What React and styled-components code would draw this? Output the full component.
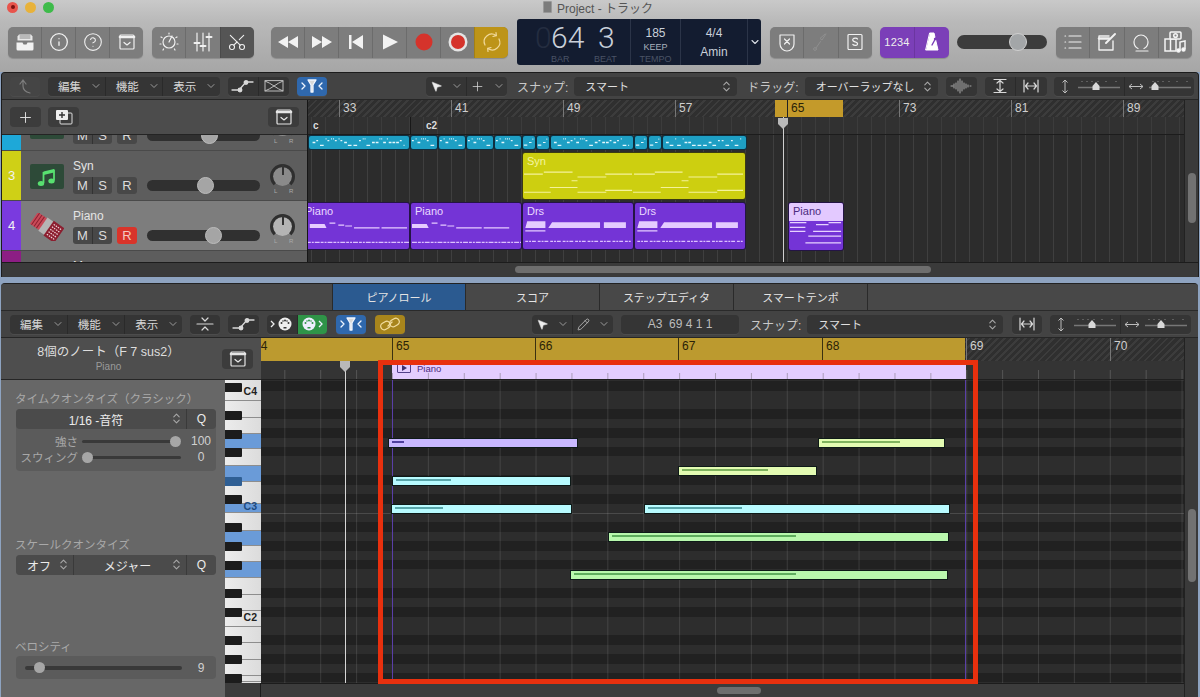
import React from 'react';
import styled, { createGlobalStyle } from 'styled-components';
import { Info, CircleHelp, Scissors, MousePointer2, Plus, Pencil, ChevronDown, ChevronsUpDown } from 'lucide-react';

const FONT = `"Liberation Sans", "Noto Sans CJK JP", sans-serif`;

const Global = createGlobalStyle`
  html, body { margin: 0; padding: 0; background: #8ea3c0; }
  * { box-sizing: border-box; }
  #root { width: 1200px; height: 697px; overflow: hidden; }
`;

const Page = styled.div`
  width: 1200px; height: 697px; overflow: hidden; display: flex; flex-direction: column;
  font-family: ${FONT}; color: #e6e6e6; position: relative;
`;

/* ---------- top toolbar ---------- */
const TopBar = styled.header`
  height: 72px; flex: none; display: flex; flex-direction: column;
  background: linear-gradient(#c9c9c9, #b9b9b9 30%, #a6a6a6);
`;
const TitleRow = styled.div`
  height: 14px; display: flex; align-items: center; position: relative; padding-left: 7px; gap: 7px;
`;
const Light = styled.span`
  width: 11px; height: 11px; border-radius: 50%; background: ${p => p.$c};
  display: flex; align-items: center; justify-content: center;
`;
const LightDot = styled.span`width: 4px; height: 4px; border-radius: 50%; background: #7a1010;`;
const Title = styled.div`
  position: absolute; left: 543px; top: 0; height: 14px; display: flex; align-items: center; gap: 5px;
  font-size: 12px; color: #555; white-space: nowrap;
`;
const ProjIcon = styled.span`width: 9px; height: 12px; background: #7c7c7c; border: 1px solid #999; border-radius: 1px;`;

const Tools = styled.div`
  margin-top: 5px; height: 46px; padding-left: 8px; display: flex; align-items: center; gap: 9px;
`;
const Grp = styled.div`
  display: flex; flex: none; width: ${p => p.$w}px; height: 31px; margin-left: ${p => p.$ml || 0}px;
  border-radius: 5px; overflow: hidden; background: ${p => p.$bg || '#7d7d7d'};
  box-shadow: 0 1px 1px rgba(0,0,0,.18);
`;
const TBtn = styled.div`
  flex: 1; display: flex; align-items: center; justify-content: center; color: #f0f0f0;
  background: ${p => p.$bg || 'transparent'};
  & + & { border-left: 1px solid rgba(0,0,0,.13); }
`;
const Count = styled.span`font-size: 11px; color: #eee; letter-spacing: .2px;`;

const Lcd = styled.div`
  width: 244px; height: 46px; flex: none; display: flex; border-radius: 3px; background: #131c30; color: #c9d0da;
`;
const LcdPos = styled.div`
  width: 114px; position: relative; border-right: 1px solid #2b3448;
`;
const BigNum = styled.span`
  position: absolute; top: 2px; left: ${p => p.$x}px; font: 300 30px/34px Roboto, sans-serif;
  color: ${p => p.$dim ? '#242d40' : '#c9d0da'};
`;
const LcdCap = styled.span`
  position: absolute; bottom: 0; left: ${p => p.$x}px; font-size: 9px; line-height: 11px; color: #4a5366;
`;
const LcdCol = styled.div`
  width: ${p => p.$w}px; display: flex; flex-direction: column; align-items: center; border-right: 1px solid #2b3448;
  padding-top: 7px;
`;
const LcdVal = styled.span`font-size: 12px; line-height: 14px; color: #c9d0da; margin-top: ${p => p.$mt || 0}px;`;
const LcdSub = styled.span`font-size: 9px; line-height: 12px; color: ${p => p.$dim ? '#4a5366' : '#a9b1bd'}; margin-top: ${p => p.$mt || 0}px;`;
const LcdMore = styled.div`flex: 1; display: flex; align-items: center; justify-content: center; color: #d8dde4;`;

const VolTrack = styled.div`
  width: 90px; height: 14px; flex: none; border-radius: 7px; background: #3c3c3c; position: relative; margin: 0 0 0 -1px;
`;
const VolThumb = styled.span`
  position: absolute; left: 52px; top: -2px; width: 18px; height: 18px; border-radius: 50%;
  background: #a3a6a8; border: 1px solid #d0d0d0;
`;

/* ---------- windows ---------- */
const ArrangeWin = styled.section`
  height: 205px; flex: none; margin: 0 1px 0 1px; background: #383838; border: 1px solid #1c1c1c; border-bottom: 0;
  border-radius: 4px 4px 0 0; display: flex; flex-direction: column; overflow: hidden;
`;
const Stripe = styled.div`height: 6px; flex: none; background: #8ea3c0;`;
const ToolRow = styled.div`
  height: 27px; flex: none; display: flex; align-items: center; padding-left: ${p => p.$pl || 9}px;
  background: #434343; border-bottom: 1px solid #262626;
`;
const DGrp = styled.div`
  display: flex; flex: none; height: 19px; width: ${p => p.$w}px; margin-left: ${p => p.$ml || 0}px;
  border-radius: 4px; overflow: hidden; background: ${p => p.$bg || '#353535'};
  box-shadow: 0 1px 0 rgba(255,255,255,.05);
  color: #d5d5d5;
`;
const DBtn = styled.div`
  flex: 1; display: flex; align-items: center; justify-content: center; gap: 8px;
  font-size: 12px; color: ${p => p.$c || '#d8d8d8'}; background: ${p => p.$bg || 'transparent'};
  & + & { border-left: 1px solid #2a2a2a; }
`;
const MenuCell = styled(DBtn)`justify-content: flex-start; padding-left: 10px; gap: 9px; font-size: 11.5px;`;
const Chev = styled(ChevronDown)`color: #9a9a9a; flex: none;`;
const ToolLabel = styled.span`
  margin-left: ${p => p.$ml}px; font-size: 12px; color: #c8c8c8; white-space: nowrap; flex: none;
`;
const SelectBox = styled.div`
  flex: none; width: ${p => p.$w}px; height: 19px; margin-left: ${p => p.$ml}px; border-radius: 4px; background: #353535;
  display: flex; align-items: center; justify-content: space-between; padding: 0 4px 0 11px; font-size: 11px; color: #e0e0e0;
  white-space: nowrap;
`;
const Stepper = styled(ChevronsUpDown)`color: #a8a8a8; flex: none;`;

const ArrangeBody = styled.div`
  height: 162px; flex: none; display: grid; grid-template-columns: 306px 1fr;
`;
const TrackCol = styled.div`
  display: flex; flex-direction: column; border-right: 1px solid #161616; overflow: hidden; min-height: 0;
`;
const TrackHead = styled.div`
  height: 35px; flex: none; background: #4c4c4c; border-bottom: 1px solid #242424; display: flex; align-items: center;
  padding-left: 8px; position: relative; z-index: 1;
`;
const HeadBtn = styled.div`
  width: ${p => p.$w || 31}px; height: 20px; flex: none; margin-left: ${p => p.$ml || 0}px; border-radius: 4px; background: #3c3c3c;
  display: flex; align-items: center; justify-content: center; color: #e6e6e6;
`;
const TrackList = styled.div`flex: 1; overflow: hidden; background: #4a4a4a; min-height: 0;`;
const TrackScroll = styled.div`margin-top: -34px;`;
const Track = styled.div`
  height: 50px; display: flex; border-bottom: 1px solid #4a4a4a;
  background: ${p => p.$sel ? '#7d7d7d' : '#5d5d5d'};
`;
const TrackNum = styled.div`
  width: 19px; flex: none; background: ${p => p.$c}; color: #f2f2f2; font-size: 13px;
  display: flex; align-items: center; justify-content: center;
`;
const TrackIcon = styled.div`
  width: 34px; height: 25px; flex: none; margin: 13px 0 0 9px; border-radius: 2px; background: ${p => p.$bg || 'transparent'};
  display: flex; align-items: center; justify-content: center;
`;
const TrackMain = styled.div`
  width: 72px; flex: none; margin-left: 9px; display: flex; flex-direction: column; padding-top: 8px;
`;
const TrackName = styled.div`font-size: 12px; line-height: 15px; height: 18px; color: #e4e4e4;`;
const MsrRow = styled.div`display: flex; gap: 5px;`;
const MsGroup = styled.div`display: flex; width: 39px; height: 17px; border-radius: 3px; overflow: hidden; background: #484848;`;
const MsBtn = styled.div`
  flex: 1; display: flex; align-items: center; justify-content: center; font-size: 13px; color: #dcdcdc;
  background: ${p => p.$bg || 'transparent'};
  & + & { border-left: 1px solid #333; }
`;
const RBtn = styled(MsBtn)`flex: none; width: 20px; height: 17px; border-radius: 3px; background: ${p => p.$on ? '#d9342a' : '#484848'}; color: ${p => p.$on ? '#f5c7c0' : '#dcdcdc'};`;
const Fader = styled.div`
  width: 113px; height: 11px; flex: none; margin: 29px 0 0 2px; border-radius: 6px; background: #303030; position: relative;
`;
const FaderThumb = styled.span`
  position: absolute; left: ${p => p.$x}px; top: -3px; width: 17px; height: 17px; border-radius: 50%; background: #a5a5a5;
  border: 1px solid #bcbcbc;
`;
const KnobWrap = styled.div`position: relative; margin-left: 10px; width: 25px; flex: none;`;
const Knob = styled.div`
  width: 25px; height: 25px; margin-top: 13px; border-radius: 50%; border: 3px solid #2f2f2f; position: relative;
  border-bottom-color: transparent;
  background: ${p => p.$sel ? '#b4b4b4' : '#8a8a8a'}; background-clip: padding-box;
  &::before { content: ''; position: absolute; left: 8.5px; top: -3px; width: 2px; height: 11px; background: #333; }
`;
const LR = styled.span`
  position: absolute; top: 37px; font-size: 6px; color: #aaa; left: ${p => p.$x}px;
`;

const ArrangeCanvasWrap = styled.div`display: flex; min-width: 0; min-height: 0;`;
const ArrangeCanvas = styled.div`flex: 1; position: relative; display: flex; flex-direction: column; min-width: 0; overflow: hidden;`;
const Hatch = styled.div`
  height: 17px; flex: none; position: relative; overflow: hidden;
  background: repeating-linear-gradient(135deg, #3c3c3c 0 2px, #2f2f2f 2px 5px);
`;
const BarNum = styled.span.attrs(p => ({ style: { left: p.$x } }))`
  position: absolute; top: 0; height: 100%; padding: 1px 0 0 3px; border-left: 1px solid ${p => p.$c || '#777'};
  font-size: 12px; line-height: 15px; color: ${p => p.$dark ? '#2a2208' : '#cfcfcf'};
`;
const Cycle = styled.div`position: absolute; left: 467px; top: 0; width: 68px; height: 17px; background: #c49a2a;`;
const MarkerRow = styled.div`
  height: 18px; flex: none; position: relative; background: #313131; border-bottom: 1px solid #1c1c1c;
  background-image: linear-gradient(90deg, #3c3c3c 1px, transparent 1px); background-size: 14px 100%; background-position: 3px 0;
`;
const Marker = styled.span.attrs(p => ({ style: { left: p.$x } }))`
  position: absolute; top: 0; padding-left: 5px; height: 100%; font-size: 10px; line-height: 17px; font-weight: bold; color: #ddd;
`;
const MarkerSep = styled.span`position: absolute; left: 102px; top: 0; width: 1px; height: 100%; background: #181818;`;
const Lanes = styled.div`
  flex: 1; position: relative; overflow: hidden; background-color: #2c2c2c;
  background-image: linear-gradient(90deg, #3f3f3f 1px, transparent 1px); background-size: 14px 100%; background-position: 3px 0;
`;
const Region = styled.div.attrs(p => ({ style: { left: p.$x, top: p.$y, width: p.$w, height: p.$h } }))`
  position: absolute; border-radius: 3px; overflow: hidden; background: ${p => p.$bg};
  border: 1px solid rgba(10,10,20,.75); color: ${p => p.$fg || '#ead9ff'};
  font-size: 11px; line-height: 13px;
`;
const RegionName = styled.span`position: absolute; left: 4px; top: 2px; white-space: nowrap;`;
const RegionArt = styled.svg`position: absolute; left: 0; top: 0; width: 100%; height: 100%;`;
const SelTop = styled.div`position: absolute; left: 0; top: 0; right: 0; height: 18px; background: #e3c9ff;`;
const Playhead = styled.div`position: absolute; left: 475px; top: 17px; bottom: 0; width: 1px; background: #cfcfcf; z-index: 3;`;
const PlayCap = styled.svg`position: absolute; left: -6px; top: 1px;`;
const VScroll = styled.div`
  width: 14px; flex: none; position: relative; background: #3a3a3a; border-left: 1px solid #222;
`;
const VThumb = styled.span`
  position: absolute; left: 3px; top: ${p => p.$y}px; width: 8px; height: ${p => p.$h}px; border-radius: 4px; background: #727272;
`;
const ArrangeFoot = styled.div`
  height: 14px; flex: none; background: #3a3a3a; border-top: 1px solid #1c1c1c; position: relative;
`;
const HThumb = styled.span`
  position: absolute; left: ${p => p.$x}px; top: 3px; width: ${p => p.$w}px; height: 7px; border-radius: 4px; background: #6e6e6e;
`;

/* ---------- piano roll window ---------- */
const EditorWin = styled.section`
  flex: 1; min-height: 0; margin: 0 2px 0 1px; background: #444; border-top: 1px solid #222; border-radius: 4px 4px 0 0;
  display: flex; flex-direction: column; overflow: hidden;
`;
const TabRow = styled.div`
  height: 27px; flex: none; display: flex; padding-left: 331px; background: #484848; border-bottom: 1px solid #2a2a2a;
`;
const Tab = styled.div`
  width: 134px; flex: none; display: flex; align-items: center; justify-content: center; font-size: 11px; color: #e4e4e4;
  background: ${p => p.$on ? '#2b5a90' : 'transparent'}; border-right: 1px solid #2a2a2a;
  &:first-child { border-left: 1px solid #2a2a2a; }
`;
const EditorMain = styled.div`
  flex: 1; min-height: 0; display: grid; grid-template-columns: 260px 1fr; position: relative;
`;
const LeftCol = styled.div`display: flex; flex-direction: column; min-height: 0;`;
const InfoHead = styled.div`
  height: 42px; flex: none; background: #4e4e4e; border-bottom: 1px solid #262626; display: flex; align-items: center; padding: 0 8px 0 0;
`;
const InfoText = styled.div`flex: 1; display: flex; flex-direction: column; align-items: center; padding-right: 6px;`;
const InfoTitle = styled.div`font-size: 12.5px; line-height: 15px; color: #dedede; white-space: nowrap;`;
const InfoSub = styled.div`font-size: 10px; line-height: 13px; color: #9a9a9a;`;
const LowerLeft = styled.div`flex: 1; min-height: 0; display: flex;`;
const Inspector = styled.div`
  width: 224px; flex: none; background: #676767; padding-left: 15px; display: flex; flex-direction: column;
`;
const InspLabel = styled.div`
  font-size: 11.5px; line-height: 14px; color: #a9a9a9; margin-top: ${p => p.$mt}px; white-space: nowrap; margin-left: -1px;
`;
const InspBox = styled.div`
  width: 200px; flex: none; margin-top: ${p => p.$mt}px; height: ${p => p.$h}px; border-radius: 4px; background: #5b5b5b;
  display: flex; flex-direction: column; position: relative;
`;
const InspTop = styled.div`
  height: 20px; flex: none; display: flex; background: #4b4b4b; border-radius: 4px; margin-bottom: ${p => p.$mb || 0}px;
`;
const InspCell = styled.div`
  width: ${p => p.$w}px; flex: none; display: flex; align-items: center; justify-content: center;
  font-size: 12px; color: #ececec; position: relative; white-space: nowrap; padding-right: ${p => p.$pr || 0}px;
  & + & { border-left: 1px solid #3a3a3a; }
`;
const CellStepper = styled(Stepper)`position: absolute; right: 3px; top: 3px;`;
const SlideRow = styled.div`
  height: 16px; display: grid; grid-template-columns: 62px 99px 32px; column-gap: 4px; align-items: center; font-size: 11.5px; color: #a8a8a8;
`;
const SlideLabel = styled.span`text-align: right; white-space: nowrap;`;
const SlideTrack = styled.div`height: 3px; border-radius: 2px; background: #393939; position: relative;`;
const SlideThumb = styled.span`
  position: absolute; left: ${p => p.$x}px; top: -4px; width: 11px; height: 11px; border-radius: 50%; background: #a6a6a6;
`;
const SlideVal = styled.span`text-align: center; font-size: 12px; color: #d0d0d0;`;
const VelRow = styled.div`
  height: 100%; display: flex; align-items: center; padding-left: 9px; gap: 9px;
`;
const VelTrack = styled(SlideTrack)`width: 157px; height: 4px;`;

const Piano = styled.div`
  width: 36px; flex: none; height: 303px; position: relative; display: flex; flex-direction: column; background: #e4e4e4;
`;
const WhiteKey = styled.div.attrs(p => ({ style: { height: p.$h } }))`
  flex: none; background: ${p => p.$on ? '#6a9bd8' : 'linear-gradient(90deg,#ececec,#dcdcdc)'}; border-bottom: 1px solid #8d8d8d;
  position: relative;
`;
const KeyLabel = styled.span`
  position: absolute; right: 4px; bottom: ${p => p.$b}px; font-size: 10.5px; line-height: 11px; font-weight: bold;
  color: ${p => p.$on ? '#1d4a80' : '#222'};
`;
const BlackKey = styled.span.attrs(p => ({ style: { top: p.$y } }))`
  position: absolute; left: 0; width: 17px; height: 9px; background: ${p => p.$on ? '#2f5f94' : '#1c1c1c'}; border-radius: 0 1px 1px 0;
`;
const PianoFoot = styled.div`height: 14px; flex: none; background: #3c3c3c; border-right: 1px solid #1c1c1c;`;
const PianoCol = styled.div`display: flex; flex-direction: column;`;

const RightCol = styled.div`display: flex; min-width: 0; min-height: 0;`;
const RollCol = styled.div`flex: 1; min-width: 0; display: flex; flex-direction: column; position: relative;`;
const RollRuler = styled.div`
  height: 23px; flex: none; position: relative; overflow: hidden;
  background: repeating-linear-gradient(135deg, #3c3c3c 0 2px, #2f2f2f 2px 5px);
`;
const Gold = styled.div`position: absolute; left: 0; top: 0; width: 704px; height: 100%; background: #bc9a2f;`;
const RollHead = styled.div`
  height: 19px; flex: none; position: relative; background-color: #343434; border-bottom: 1px solid #1f1f1f;
  background-image: linear-gradient(#343434 9px, transparent 9px), linear-gradient(90deg, #555 1px, transparent 1px);
  background-size: 100% 100%, 35.9px 100%; background-position: 0 0, 23.3px 0;
`;
const PianoRegion = styled.div`
  position: absolute; left: 131px; top: 0; width: 574px; height: 18px; background-color: #e3cdff; color: #4b2b80;
  font-size: 9.5px; line-height: 15px; padding-left: 25px;
  background-image: linear-gradient(#e3cdff 12px, transparent 12px), linear-gradient(90deg, #a99bb8 1px, transparent 1px);
  background-size: 100% 100%, 35.9px 100%;
`;
const PlayBox = styled.span`
  position: absolute; left: 5px; top: 2px; width: 14px; height: 10px; border: 1px solid #52408a; border-radius: 1px;
  display: flex; align-items: center; justify-content: center;
`;
const PlayTri = styled.i`
  width: 0; height: 0; border-left: 5px solid #3d2e70; border-top: 3px solid transparent; border-bottom: 3px solid transparent;
`;

const lanes = ['l', 'd', 'l', 'd', 'l', 'd', 'l', 'l', 'd', 'l', 'd', 'l'];
const step = 113 / 12;
const stops = lanes.map((k, i) => `${k === 'l' ? '#2d2d2d' : '#212121'} ${(i * step).toFixed(2)}px ${((i + 1) * step).toFixed(2)}px`).join(',');

const RollGrid = styled.div`
  height: 303px; flex: none; position: relative; overflow: hidden;
  background-color: #2a2a2a;
  background-image:
    linear-gradient(90deg, rgba(255,255,255,.11) 1px, transparent 1px),
    linear-gradient(180deg, ${stops});
  background-size: 35.9px 100%, 100% 113px;
  background-position: 23.3px 0, 0 20px;
`;
const C3Line = styled.div`position: absolute; left: 0; right: 0; top: 133px; height: 1px; background: rgba(255,255,255,.14);`;
const RegionEdge = styled.div`position: absolute; left: ${p => p.$x}px; top: 0; bottom: 0; width: 1px; background: #5a3fa8;`;
const RollPlayhead = styled.div`position: absolute; left: 84px; top: 23px; bottom: 14px; width: 1px; background: #d6d6d6; z-index: 3;`;
const PlayCapBox = styled.svg`position: absolute; left: 78px; top: 23px; z-index: 3;`;
const Note = styled.div.attrs(p => ({ style: { left: p.$x, top: p.$y, width: p.$w } }))`
  position: absolute; height: 10px; background: ${p => p.$c}; border: 1.5px solid #0e1a18; z-index: 2;
`;
const NoteVel = styled.span.attrs(p => ({ style: { width: p.$w } }))`
  position: absolute; left: 3px; top: 1.5px; height: 2px; background: ${p => p.$c};
`;
const RollFoot = styled.div`height: 14px; flex: none; background: #3c3c3c; border-top: 1px solid #1c1c1c; position: relative;`;
const RedFrame = styled.div`
  position: absolute; left: 117px; top: 22px; width: 600px; height: 324px; border: 5px solid #e8300e; z-index: 4; pointer-events: none;
`;

/* ---------- icons ---------- */
const Ic = styled.svg`display: block; flex: none;`;
const S = ({ w = 20, h = 20, children, c = 'currentColor', sw = 1.4 }) => (
  <Ic width={w} height={h} viewBox={`0 0 ${w} ${h}`} fill="none" stroke={c} strokeWidth={sw} strokeLinecap="round" strokeLinejoin="round">{children}</Ic>
);
const Solid = ({ w = 22, h = 18, d }) => (
  <Ic width={w} height={h} viewBox={`0 0 ${w} ${h}`}><path d={d} fill="#f2f2f2"/></Ic>
);
const TrayIcon = () => (
  <S w={22} h={22}><path d="M5 3.5h12l1.5 2v4h-15v-4z" fill="#e8e8e8" stroke="none"/><path d="M6 5h10M6 7h10" stroke="#888" strokeWidth="1"/><path d="M2.5 11.5h6l1 2h3l1-2h6V18a1.5 1.5 0 0 1-1.5 1.5H4A1.5 1.5 0 0 1 2.5 18z" fill="#f2f2f2" stroke="none"/></S>
);
const PanelIcon = () => (
  <S w={18} h={18} sw={1.2}><rect x="2" y="2" width="14" height="14" rx="1"/><path d="M2 4h14" strokeWidth="2.6"/><path d="M6 9.5l3 2.5 3-2.500"/></S>
);
const DialIcon = () => (
  <S w={22} h={22} sw={1.2}><circle cx="11" cy="11" r="6"/><path d="M11 11l3-6M11 2v1M3 6l1 .6M19 6l-1 .6M2 13h1M19 13h1M5 19l.6-1M17 19l-.6-1"/></S>
);
const MixerIcon = () => (
  <S w={22} h={22} sw={1.2}><path d="M5 2v18M11 2v18M17 2v18"/><path d="M2.500 12h5M8.500 15h5M14.500 6h5" strokeWidth="2"/></S>
);
const ShieldX = () => (
  <S w={20} h={20} sw={1.2}><path d="M3 3h14v9a7 7 0 0 1-14 0z"/><path d="M7.500 7l5 5M12.500 7l-5 5"/></S>
);
const Tuner = () => (
  <S w={20} h={20} c="#8f8f8f" sw={1}><path d="M15 2l-4 6-2-1.500L14 2M9.500 9.500L5 16"/><circle cx="4" cy="17" r="1.400"/></S>
);
const SBox = () => (
  <S w={18} h={18} sw={1.2}><rect x="2" y="1.500" width="14" height="15" rx="1"/><path d="M11.500 6c-.5-1-3.500-1.400-4.500 0s.5 2.400 2 2.800 3 1.200 2.400 2.600-3.600 1.300-4.600 0"/></S>
);
const Metro = () => (
  <S w={20} h={22} c="#fff" sw={1}><path d="M8 2h4l4 17H4z" fill="#fff"/><path d="M10 14L16 3" stroke="#7b3fb8" strokeWidth="1.400"/><circle cx="13" cy="8" r="1.200" fill="#7b3fb8" stroke="none"/></S>
);
const ListIcon = () => (
  <S w={20} h={20} sw={1.2}><path d="M6 4h12M6 10h12M6 16h12M2 4h.6M2 10h.6M2 16h.6"/></S>
);
const NoteIcon = () => (
  <S w={20} h={20} sw={1.4}><path d="M2 4h10M2 4v14h14V9"/><path d="M2 6.500h10" strokeWidth="2.400"/><path d="M9 11l9-9" strokeWidth="2"/></S>
);
const LoopIcon = () => (
  <S w={20} h={20} sw={1.2}><path d="M5 19h12M7 16.500c-3-1.500-4-4-4-6.500a7 7 0 0 1 14 0c0 2.500-1 5-4 6.500"/></S>
);
const MediaIcon = () => (
  <svg width="24" height="24" viewBox="0 0 24 24" fill="none" stroke="#f4f4f4" strokeWidth="1.500"><rect x="2" y="9" width="11" height="12"/><path d="M7.500 9v12"/><rect x="7" y="2" width="11" height="7" rx="1" fill="#888"/><circle cx="12.500" cy="5.500" r="1.800"/><path d="M17 21V12l5-1v8"/><circle cx="15.500" cy="20.500" r="1.500" fill="#fff"/><circle cx="20.500" cy="19.500" r="1.500" fill="#fff"/></svg>
);
const RecCircle = ({ ring }) => (
  <svg width="22" height="22" viewBox="0 0 22 22">
    {ring && <circle cx="11" cy="11" r="9.500" fill="#e4e4e4"/>}
    <circle cx="11" cy="11" r={ring ? 7 : 8.500} fill="#d5332b"/>
  </svg>
);
const CycleIcon = () => (
  <S w={22} h={22} c="#f0d89a" sw={1.2}><path d="M4 14A7.500 7.500 0 0 1 15 4.500M15 1.500l.4 3.200-3.400.8"/><path d="M18 8A7.500 7.500 0 0 1 7 17.500M7 20.500l-.4-3.200 3.400-.8"/></S>
);
const BackIcon = () => (
  <S w={18} h={18} c="#7e7e7e" sw={1.2}><path d="M7 3L4 7M7 3l3 4M7 3v6c0 4 3 6 7 7"/></S>
);
const CurveIcon = () => (
  <S w={26} h={16} sw={1.3}><path d="M2 12h7l7-8h7"/><circle cx="10" cy="12" r="1.800" fill="currentColor"/><circle cx="16" cy="4.500" r="1.800" fill="currentColor"/></S>
);
const BowIcon = () => (
  <S w={22} h={14} c="#bdbdbd" sw={1}><path d="M2 2v10h18V2zM2 2c6 2 12 8 18 10M2 12c6-2 12-8 18-10"/></S>
);
const FilterIcon = () => (
  <S w={26} h={16} c="#f0f6ff" sw={1.3}><path d="M3 5l3 3-3 3M23 5l-3 3 3 3"/><path d="M9 2h8l-3 5v7h-2V7z" fill="currentColor"/></S>
);
const WaveIcon = () => (
  <S w={22} h={16} c="#c8c8c8" sw={.8}><path d="M1 8h2M4 6v4M6 5v6M8 3v10M10 1v14M12 3v10M14 5v6M16 6v4M18 7v2M20 8h1"/></S>
);
const FitV = () => (
  <S w={18} h={16} sw={1.2}><path d="M3 1.500h12M3 14.500h12M9 3v10M6 5l3-2.500 3 2.500M6 11l3 2.500 3-2.500"/></S>
);
const FitH = () => (
  <S w={18} h={16} sw={1.2}><path d="M2 2v12M16 2v12M4 8h10M6 5L3.500 8 6 11M12 5l2.500 3L12 11"/></S>
);
const Collapse = () => (
  <S w={20} h={16} sw={1.2}><path d="M2 8h16M7 2l3 3 3-3M7 14l3-3 3 3"/></S>
);
const MidiIcon = ({ c, flip, bg }) => (
  <svg width="26" height="16" viewBox="0 0 26 16" fill="none">
    <path d={flip ? 'M20 5l3 3-3 3' : 'M2 5l3 3-3 3'} stroke={c} strokeWidth="1.300"/>
    <g transform={`translate(${flip ? 10 : 16} 8)`}>
      <circle r="6.500" fill={c}/>
      <circle cx="-3.500" cy="-1" r="1" fill={bg}/><circle cx="3.500" cy="-1" r="1" fill={bg}/><circle cy="-3.500" r="1" fill={bg}/>
      <circle cx="-2" cy="-3" r=".8" fill={bg}/><circle cx="2" cy="-3" r=".8" fill={bg}/><rect x="-1.500" y="3" width="3" height="1.500" fill={bg}/>
    </g>
  </svg>
);
const LinkIcon = () => (
  <S w={22} h={16} c="#f1dc9e" sw={1.3}><path d="M9 10l4-4"/><rect x="1.500" y="6" width="10" height="7" rx="3.500" transform="rotate(-30 6.500 9.500)"/><rect x="10.500" y="3" width="10" height="7" rx="3.500" transform="rotate(-30 15.500 6.500)"/></S>
);
const ZoomSeg = ({ horiz, tx }) => (
  <svg width="70" height="19" viewBox="0 0 70 19" fill="none" stroke="#bdbdbd" strokeWidth="1">
    {horiz
      ? <path d="M4 9.500h14M7 7l-3 2.500L7 12M15 7l3 2.500L15 12"/>
      : <path d="M11 3v13M8.500 5.500L11 3l2.500 2.500M8.500 13.500L11 16l2.500-2.500"/>}
    <path d="M24 10.500h42" stroke="#777" strokeWidth="1.500"/>
    <path d="M28 4v1M33 4v1M38 4v1M44 4v1M52 4v1M62 4v1" stroke="#888"/>
    <path d={`M${tx} 5l3.500 4v4h-7V9z`} fill="#d8d8d8" stroke="none"/>
  </svg>
);
const AccordionIcon = () => (
  <svg width="34" height="28" viewBox="0 0 34 28">
    <g transform="rotate(35 17 14)">
      <rect x="1" y="7" width="12" height="14" fill="#c84a58"/>
      <path d="M3 7v14M6 7v14M9 7v14" stroke="#8a2030" strokeWidth="1"/>
      <rect x="12" y="6" width="8" height="16" fill="#b5b5b5"/>
      <rect x="19" y="5" width="13" height="18" fill="#8c1f30"/>
      <path d="M21 8h9M21 11h9M21 14h9M21 17h9M21 20h9" stroke="#f0d8dc" strokeWidth="1.200" strokeDasharray="1.500 1"/>
    </g>
  </svg>
);
const NotesIcon = ({ s = 22 }) => (
  <svg width={s} height={s} viewBox="0 0 22 22">
    <path d="M7.500 5.500L18 3v3.500L7.500 9z" fill="#58e070"/>
    <path d="M7.500 6v11M18 3.500v11" stroke="#58e070" strokeWidth="1.800"/>
    <ellipse cx="5" cy="17.500" rx="3.200" ry="2.500" fill="#58e070"/>
    <ellipse cx="15.500" cy="15" rx="3.200" ry="2.500" fill="#58e070"/>
  </svg>
);

/* ---------- data ---------- */
const topBars = [[31, 33], [143, 41], [255, 49], [367, 57], [479, 65], [591, 73], [703, 81], [815, 89]];
const cyan = [[0, 101], [102, 27], [130, 27], [158, 27], [186, 27], [214, 13], [228, 13], [242, 83], [326, 13], [340, 13], [354, 84]];
const yellowNotes = [
  [1, 20, 23], [21, 50, 21], [55, 84, 26], [83, 110, 23], [112, 133, 23], [133, 161, 21], [167, 196, 26], [196, 222, 23],
  [49, 55, 30], [160, 167, 30], [27, 55, 37], [139, 167, 37], [1, 28, 42], [55, 84, 42], [83, 110, 40], [111, 139, 42], [167, 196, 42], [196, 222, 40]
];
const Yellow = () => (
  <RegionArt viewBox="0 0 224 48" preserveAspectRatio="none">
    {yellowNotes.map(([a, b, y], i) => <path key={i} d={`M${a} ${y - 1}H${b}`} stroke="#f4f29a" strokeWidth="1.200"/>)}
  </RegionArt>
);
const PianoArt = ({ w = 111, off = 0 }) => (
  <RegionArt viewBox={`0 0 ${w} 48`} preserveAspectRatio="none">
    <path d={`M${1 + off} 22h15l2 4h-17z`} fill="#e6ccff"/>
    <path d={`M${21 + off} 21h6M${30 + off} 23h6M${37 + off} 24h7M${46 + off} 26h26M${74 + off} 26h26`} stroke="#e6ccff" strokeWidth="1.300"/>
    <path d={`M1 41H${w}`} stroke="#dcc0ff" strokeWidth="1.300" strokeDasharray="5 1 3 1 2 1"/>
  </RegionArt>
);
const DrsArt = () => (
  <RegionArt viewBox="0 0 112 48">
    <path d="M3 19h19v7H1zM29 20h26v6H25zM55 20h24v6H55zM83 20h23v6H83z" fill="#e4ccff"/>
    <path d="M1 29h21" stroke="#e4ccff" strokeWidth="1.300"/>
    <path d="M1 40h110" stroke="#dcc0ff" strokeWidth="1.300" strokeDasharray="3 1 2 1 4 2"/>
  </RegionArt>
);
const SelArt = () => (
  <RegionArt viewBox="0 0 56 48">
    {[[1, 18, 20], [41, 54, 20], [28, 41, 22], [1, 17, 25], [25, 54, 29], [1, 17, 29], [20, 54, 34], [17, 54, 41]].map(([a, b, y], i) => (
      <path key={i} d={`M${a} ${y}H${b}`} stroke="#e6d2ff" strokeWidth="1.300"/>
    ))}
  </RegionArt>
);
/* deterministic scatter of note dashes, sized to the region */
const cyanPath = (w) => {
  let d = '';
  let seed = w * 7 + 3;
  for (let x = 1; x < w - 2;) {
    seed = (seed * 37 + 11) % 101;
    const len = 1 + seed % 4;
    const y = [3, 5, 7, 10][seed % 4];
    d += `M${x} ${y}h${Math.min(len, w - 2 - x)}`;
    x += len + 1 + (seed % 2);
  }
  return d;
};
const CyanArt = ({ w }) => (
  <RegionArt viewBox={`0 0 ${w} 14`}>
    <path d={cyanPath(w)} stroke="#e2f6fc" strokeWidth="1.400"/>
  </RegionArt>
);

const whiteKeys = [
  [21, 0, 'C4', 3], [17], [16], [15, 1], [17], [16, 1], [22], [9, 1, 'C3', 0], [18], [15, 1], [16], [16, 1], [17], [16], [16, 0, 'C2', 3], [16], [17], [16], [6]
];
const blackKeys = [3, 31, 50, 68, 97, 115, 143, 162, 181, 209, 228, 256, 275, 294];
const notes = [
  { x: 127, y: 58, w: 190, c: '#c9b8ff', v: 12, vc: '#4f3f9e' },
  { x: 557, y: 58, w: 127, c: '#e3fbb2', v: 78, vc: '#7fb35e' },
  { x: 417, y: 86, w: 139, c: '#e3fbb2', v: 86, vc: '#7fb35e' },
  { x: 131, y: 96, w: 179, c: '#b8fbff', v: 55, vc: '#5aa7ab' },
  { x: 130, y: 124, w: 181, c: '#b8fbff', v: 48, vc: '#5aa7ab' },
  { x: 383, y: 124, w: 306, c: '#b8fbff', v: 94, vc: '#5aa7ab' },
  { x: 347, y: 152, w: 341, c: '#b9f8ad', v: 184, vc: '#5fae5e' },
  { x: 309, y: 190, w: 378, c: '#b9f8ad', v: 222, vc: '#5fae5e' },
];
const rollBars = [[131, '65'], [274, '66'], [417, '67'], [561, '68'], [705, '69'], [849, '70']];

const TrackRow = ({ n, c, name, icon, iconBg, x, sel, rec }) => (
  <Track $sel={sel}>
    <TrackNum $c={c}>{n}</TrackNum>
    <TrackIcon $bg={iconBg}>{icon}</TrackIcon>
    <TrackMain>
      <TrackName>{name}</TrackName>
      <MsrRow>
        <MsGroup><MsBtn>M</MsBtn><MsBtn>S</MsBtn></MsGroup>
        <RBtn $on={rec}>R</RBtn>
      </MsrRow>
    </TrackMain>
    <Fader><FaderThumb $x={x}/></Fader>
    <KnobWrap>
      <Knob $sel={sel}/>
      <LR $x={4}>L</LR><LR $x={19}>R</LR>
    </KnobWrap>
  </Track>
);

const SlideLine = ({ label, x, v }) => (
  <SlideRow>
    <SlideLabel>{label}</SlideLabel>
    <SlideTrack><SlideThumb $x={x}/></SlideTrack>
    <SlideVal>{v}</SlideVal>
  </SlideRow>
);

const MenuGrp = () => (
  <>
    <MenuCell>編集<Chev size={12}/></MenuCell>
    <MenuCell>機能<Chev size={12}/></MenuCell>
    <MenuCell>表示<Chev size={12}/></MenuCell>
  </>
);

export default function App() {
  return (
    <Page>
      <Global/>
      <TopBar>
        <TitleRow>
          <Light $c="#e8544c"><LightDot/></Light>
          <Light $c="#e8b23a"/>
          <Light $c="#3ebb4a"/>
          <Title><ProjIcon/>Project - トラック</Title>
        </TitleRow>
        <Tools>
          <Grp $w={135}>
            <TBtn><TrayIcon/></TBtn>
            <TBtn><Info size={20} strokeWidth={1.6}/></TBtn>
            <TBtn><CircleHelp size={20} strokeWidth={1.3}/></TBtn>
            <TBtn><PanelIcon/></TBtn>
          </Grp>
          <Grp $w={102}>
            <TBtn><DialIcon/></TBtn>
            <TBtn><MixerIcon/></TBtn>
            <TBtn $bg="#555"><Scissors size={20} strokeWidth={1.3} style={{ transform: 'rotate(-90deg)' }}/></TBtn>
          </Grp>
          <Grp $w={237} $ml={8}>
            <TBtn><Solid d="M11 3v12L1 9zM21 3v12L11 9z"/></TBtn>
            <TBtn><Solid d="M1 3v12l10-6zM11 3v12l10-6z"/></TBtn>
            <TBtn><Solid d="M4 2h2.500v14H4zM18 2v14L7 9z"/></TBtn>
            <TBtn><Solid d="M4 1.500v15L19 9z"/></TBtn>
            <TBtn><RecCircle/></TBtn>
            <TBtn><RecCircle ring/></TBtn>
            <TBtn $bg="#bd9418"><CycleIcon/></TBtn>
          </Grp>
          <Lcd>
            <LcdPos>
              <BigNum $x={18} $dim>0</BigNum>
              <BigNum $x={34}>64</BigNum>
              <BigNum $x={81}>3</BigNum>
              <LcdCap $x={34}>BAR</LcdCap>
              <LcdCap $x={77}>BEAT</LcdCap>
            </LcdPos>
            <LcdCol $w={50}>
              <LcdVal>185</LcdVal>
              <LcdSub $mt={1}>KEEP</LcdSub>
              <LcdSub $dim>TEMPO</LcdSub>
            </LcdCol>
            <LcdCol $w={67}>
              <LcdVal>4/4</LcdVal>
              <LcdVal $mt={5}>Amin</LcdVal>
            </LcdCol>
            <LcdMore><ChevronDown size={12} strokeWidth={2.2}/></LcdMore>
          </Lcd>
          <Grp $w={102}>
            <TBtn><ShieldX/></TBtn>
            <TBtn><Tuner/></TBtn>
            <TBtn><SBox/></TBtn>
          </Grp>
          <Grp $w={69} $ml={-1} $bg="#7b3fb8">
            <TBtn><Count>1234</Count></TBtn>
            <TBtn><Metro/></TBtn>
          </Grp>
          <VolTrack><VolThumb/></VolTrack>
          <Grp $w={136}>
            <TBtn><ListIcon/></TBtn>
            <TBtn><NoteIcon/></TBtn>
            <TBtn><LoopIcon/></TBtn>
            <TBtn><MediaIcon/></TBtn>
          </Grp>
        </Tools>
      </TopBar>

      <ArrangeWin>
        <ToolRow $pl={8}>
          <DGrp $w={30} $bg="#454545"><DBtn><BackIcon/></DBtn></DGrp>
          <DGrp $w={172} $ml={8}><MenuGrp/></DGrp>
          <DGrp $w={61} $ml={8}><DBtn><CurveIcon/></DBtn><DBtn><BowIcon/></DBtn></DGrp>
          <DGrp $w={30} $ml={8} $bg="#2f68ad"><DBtn><FilterIcon/></DBtn></DGrp>
          <DGrp $w={81} $ml={99}>
            <DBtn><MousePointer2 size={13} fill="#eee" strokeWidth={1}/><Chev size={12}/></DBtn>
            <DBtn><Plus size={15} strokeWidth={1.2}/><Chev size={12}/></DBtn>
          </DGrp>
          <ToolLabel $ml={10}>スナップ:</ToolLabel>
          <SelectBox $w={163} $ml={6}>スマート<Stepper size={13}/></SelectBox>
          <ToolLabel $ml={10}>ドラッグ:</ToolLabel>
          <SelectBox $w={133} $ml={6}>オーバーラップなし<Stepper size={13}/></SelectBox>
          <DGrp $w={31} $ml={8}><DBtn><WaveIcon/></DBtn></DGrp>
          <DGrp $w={62} $ml={8}><DBtn><FitV/></DBtn><DBtn><FitH/></DBtn></DGrp>
          <DGrp $w={140} $ml={7}><DBtn><ZoomSeg tx={42}/></DBtn><DBtn><ZoomSeg horiz tx={30}/></DBtn></DGrp>
        </ToolRow>
        <ArrangeBody>
          <TrackCol>
            <TrackHead>
              <HeadBtn><Plus size={17} strokeWidth={1.3}/></HeadBtn>
              <HeadBtn $ml={7}>
                <svg width="18" height="16" viewBox="0 0 18 16" fill="none"><rect x="5" y="4" width="12" height="11" rx="1" stroke="#ddd"/><rect x="1" y="1" width="12" height="10" rx="1" fill="#eee"/><path d="M7 3v6M4 6h6" stroke="#333" strokeWidth="1.400"/></svg>
              </HeadBtn>
              <HeadBtn $ml={189}><PanelIcon/></HeadBtn>
            </TrackHead>
            <TrackList>
              <TrackScroll>
                <TrackRow n="" c="#1ea8d8" name="" x={54} icon={<NotesIcon s={14}/>} iconBg="#2d4a38"/>
                <TrackRow n="3" c="#cfd016" name="Syn" x={50} icon={<NotesIcon/>} iconBg="#2d4a38"/>
                <TrackRow n="4" c="#7a3adf" name="Piano" x={58} sel rec icon={<AccordionIcon/>}/>
                <TrackRow n="" c="#8c1e84" name="Ma" x={50} icon={null}/>
              </TrackScroll>
            </TrackList>
          </TrackCol>
          <ArrangeCanvasWrap>
            <ArrangeCanvas>
              <Hatch>
                <Cycle/>
                {topBars.map(([x, n]) => <BarNum key={n} $x={x} $c={n === 65 ? '#222' : '#777'} $dark={n === 65}>{n}</BarNum>)}
              </Hatch>
              <MarkerRow>
                <Marker $x={0}>c</Marker>
                <MarkerSep/>
                <Marker $x={113}>c2</Marker>
              </MarkerRow>
              <Lanes>
                {cyan.map(([x, w]) => (
                  <Region key={x} $x={x} $y={0} $w={w + 1} $h={15} $bg="#1e9fc4"><CyanArt w={w + 1}/></Region>
                ))}
                <Region $x={214} $y={17} $w={224} $h={48} $bg="#cdcf10" $fg="#f4f3a0"><RegionName>Syn</RegionName><Yellow/></Region>
                <Region $x={-8} $y={67} $w={110} $h={48} $bg="#7434d6"><RegionName>Piano</RegionName><PianoArt w={110} off={8}/></Region>
                <Region $x={102} $y={67} $w={112} $h={48} $bg="#7434d6"><RegionName>Piano</RegionName><PianoArt w={112} off={0}/></Region>
                <Region $x={214} $y={67} $w={112} $h={48} $bg="#7434d6"><RegionName>Drs</RegionName><DrsArt/></Region>
                <Region $x={326} $y={67} $w={112} $h={48} $bg="#7434d6"><RegionName>Drs</RegionName><DrsArt/></Region>
                <Region $x={480} $y={67} $w={56} $h={49} $bg="#7434d6" $fg="#4b2b80"><SelTop/><RegionName>Piano</RegionName><SelArt/></Region>
              </Lanes>
              <Playhead>
                <PlayCap width="12" height="11" viewBox="0 0 12 11"><path d="M1 0h10v6l-5 5-5-5z" fill="#b9b9b9"/></PlayCap>
              </Playhead>
            </ArrangeCanvas>
            <VScroll><VThumb $y={73} $h={50}/></VScroll>
          </ArrangeCanvasWrap>
        </ArrangeBody>
        <ArrangeFoot><HThumb $x={513} $w={416}/></ArrangeFoot>
      </ArrangeWin>
      <Stripe/>

      <EditorWin>
        <TabRow>
          <Tab $on>ピアノロール</Tab>
          <Tab>スコア</Tab>
          <Tab>ステップエディタ</Tab>
          <Tab>スマートテンポ</Tab>
        </TabRow>
        <ToolRow>
          <DGrp $w={172}><MenuGrp/></DGrp>
          <DGrp $w={30} $ml={8}><DBtn><Collapse/></DBtn></DGrp>
          <DGrp $w={31} $ml={8}><DBtn><CurveIcon/></DBtn></DGrp>
          <DGrp $w={60} $ml={8}>
            <DBtn><MidiIcon c="#eee" bg="#353535"/></DBtn>
            <DBtn $bg="#2f9448"><MidiIcon c="#eef" bg="#2f9448" flip/></DBtn>
          </DGrp>
          <DGrp $w={30} $ml={9} $bg="#2f68ad"><DBtn><FilterIcon/></DBtn></DGrp>
          <DGrp $w={30} $ml={9} $bg="#a8851c"><DBtn><LinkIcon/></DBtn></DGrp>
          <DGrp $w={81} $ml={127}>
            <DBtn><MousePointer2 size={13} fill="#eee" strokeWidth={1}/><Chev size={12}/></DBtn>
            <DBtn><Pencil size={13} strokeWidth={1.3}/><Chev size={12}/></DBtn>
          </DGrp>
          <DGrp $w={118} $ml={8}><DBtn $c="#bdbdbd">A3&nbsp;&nbsp;69 4 1 1</DBtn></DGrp>
          <ToolLabel $ml={11}>スナップ:</ToolLabel>
          <SelectBox $w={196} $ml={6}>スマート<Stepper size={13}/></SelectBox>
          <DGrp $w={30} $ml={9}><DBtn><FitH/></DBtn></DGrp>
          <DGrp $w={141} $ml={8}><DBtn><ZoomSeg tx={42}/></DBtn><DBtn><ZoomSeg horiz tx={40}/></DBtn></DGrp>
        </ToolRow>
        <EditorMain>
          <LeftCol>
            <InfoHead>
              <InfoText>
                <InfoTitle>8個のノート（F 7 sus2）</InfoTitle>
                <InfoSub>Piano</InfoSub>
              </InfoText>
              <HeadBtn><PanelIcon/></HeadBtn>
            </InfoHead>
            <LowerLeft>
              <Inspector>
                <InspLabel $mt={12}>タイムクオンタイズ（クラシック）</InspLabel>
                <InspBox $mt={3} $h={62}>
                  <InspTop $mb={4}>
                    <InspCell $w={170} $pr={10}>1/16 -音符<CellStepper size={13}/></InspCell>
                    <InspCell $w={30}>Q</InspCell>
                  </InspTop>
                  <SlideLine label="強さ" x={88} v="100"/>
                  <SlideLine label="スウィング" x={0} v="0"/>
                </InspBox>
                <InspLabel $mt={67}>スケールクオンタイズ</InspLabel>
                <InspBox $mt={3} $h={20}>
                  <InspTop>
                    <InspCell $w={57} $pr={11}>オフ<CellStepper size={13}/></InspCell>
                    <InspCell $w={113} $pr={5}>メジャー<CellStepper size={13}/></InspCell>
                    <InspCell $w={30}>Q</InspCell>
                  </InspTop>
                </InspBox>
                <InspLabel $mt={65}>ベロシティ</InspLabel>
                <InspBox $mt={2} $h={23}>
                  <VelRow>
                    <VelTrack><SlideThumb $x={9}/></VelTrack>
                    <SlideVal>&nbsp;&nbsp;9</SlideVal>
                  </VelRow>
                </InspBox>
              </Inspector>
              <PianoCol>
                <Piano>
                  {whiteKeys.map(([h, on, label, b], i) => (
                    <WhiteKey key={i} $h={h} $on={on}>{label && <KeyLabel $on={on} $b={b}>{label}</KeyLabel>}</WhiteKey>
                  ))}
                  {blackKeys.map((y, i) => <BlackKey key={y} $y={y} $on={i === 4}/>)}
                </Piano>
                <PianoFoot/>
              </PianoCol>
            </LowerLeft>
          </LeftCol>
          <RightCol>
            <RollCol>
              <RollRuler>
                <Gold/>
                <BarNum $x={-11} $c="transparent" $dark>64</BarNum>
                {rollBars.map(([x, n]) => <BarNum key={n} $x={x} $c={+n < 69 ? '#3a3010' : '#777'} $dark={+n < 69}>{n}</BarNum>)}
              </RollRuler>
              <RollHead>
                <PianoRegion><PlayBox><PlayTri/></PlayBox>Piano</PianoRegion>
              </RollHead>
              <RollGrid>
                <C3Line/>
                <RegionEdge $x={131}/>
                <RegionEdge $x={704}/>
                {notes.map(n => (
                  <Note key={n.x + '-' + n.y} $x={n.x} $y={n.y} $w={n.w} $c={n.c}><NoteVel $w={n.v} $c={n.vc}/></Note>
                ))}
              </RollGrid>
              <RollFoot><HThumb $x={456} $w={44}/></RollFoot>
              <RollPlayhead/>
              <PlayCapBox width="12" height="11" viewBox="0 0 12 11"><path d="M1 0h10v6l-5 5-5-5z" fill="#b9b9b9"/></PlayCapBox>
              <RedFrame/>
            </RollCol>
            <VScroll><VThumb $y={171} $h={73}/></VScroll>
          </RightCol>
        </EditorMain>
      </EditorWin>
    </Page>
  );
}
